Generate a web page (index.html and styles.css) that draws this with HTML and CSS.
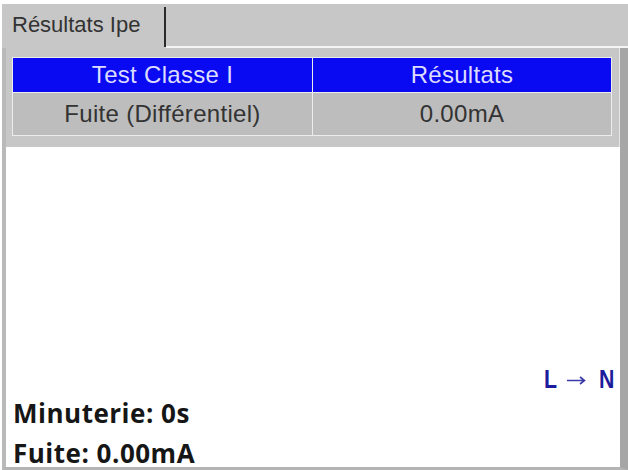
FILE: index.html
```html
<!DOCTYPE html>
<html lang="fr">
<head>
  <meta charset="UTF-8">
  <meta name="viewport" content="width=device-width, initial-scale=1.0">
  <title>Résultats Ipe</title>
  <link rel="stylesheet" href="styles.css">
</head>
<body>

<div class="screen">
  <div class="tabbar">
    <div class="tab">Résultats Ipe</div>
    <div class="tab-rest"></div>
  </div>

  <div class="frame">
    <div class="panel">
      <table class="results">
        <thead>
          <tr>
            <th>Test Classe I</th>
            <th>Résultats</th>
          </tr>
        </thead>
        <tbody>
          <tr>
            <td>Fuite (Différentiel)</td>
            <td>0.00mA</td>
          </tr>
        </tbody>
      </table>
    </div>

    <div class="content">
      <div class="polarity">
        <span class="pole">L</span>
        <svg class="arrow" width="19" height="9" viewBox="0 0 19 9">
          <path d="M0 4.5H17M13 1L17.5 4.5L13 8" fill="none" stroke="currentColor" stroke-width="1.6"/>
        </svg>
        <span class="pole">N</span>
      </div>
      <div class="readings">
        <p>Minuterie: 0s</p>
        <p>Fuite: 0.00mA</p>
      </div>
    </div>
  </div>
</div>

</body>
</html>
```

FILE: styles.css
```css
body {
  margin: 0;
  background: #fff;
  font-family: "Liberation Sans", Arial, sans-serif;
}

.screen {
  margin: 4px 0 0 2px;
  width: 626px;
  height: 466px;
  display: flex;
  flex-direction: column;
}

/* tab strip */
.tabbar {
  display: flex;
  height: 44px;
  background: #c7c7c7;
}

.tab {
  width: 152px;
  padding-left: 10px;
  border-right: 2px solid #2a2a2a;
  margin-top: 3px;
  margin-bottom: 1px;
  font-size: 22px;
  line-height: 36px;
  color: #333;
}

.tab-rest {
  flex: 1;
  border-bottom: 2px solid #f4f4f4;
}

/* body of the screen */
.frame {
  flex: 1;
  display: flex;
  flex-direction: column;
  border-left: 4px solid #b9b9b9;
  border-right: 8px solid #a6a6a6;
  border-bottom: 3px solid #b4b4b4;
}

.panel {
  background: #c7c7c7;
  padding: 9px 7px 11px 6px;
  border-right: 1px solid #e6e6e6;
}

.results {
  width: 600px;
  border-collapse: collapse;
  border: 1px solid #f6f6f6;
  font-size: 24px;
  letter-spacing: 0.3px;
  table-layout: fixed;
}

.results th, .results td {
  border: 1px solid #ececec;
  padding: 0;
  text-align: center;
  font-weight: normal;
}

.results th {
  height: 34px;
  background: #0a0af2;
  color: #dcdcff;
}

.results th:first-child, .results td:first-child {
  width: 299px;
}

.results td {
  height: 42px;
  background: #bdbdbd;
  color: #333;
}

.content {
  flex: 1;
  display: flex;
  flex-direction: column;
  justify-content: flex-end;
  padding: 0 5px 1px 6px;
  background: #fff;
}

.polarity {
  align-self: flex-end;
  display: flex;
  align-items: center;
  gap: 10px;
  margin: 0 3px 8px 0;
  font-weight: bold;
  font-size: 26px;
  line-height: 26px;
  color: #1c1c9c;
}

.pole {
  display: inline-block;
  width: 13px;
  transform: scaleX(0.82);
  transform-origin: left center;
}

.arrow {
  margin: 2px 3px 0 0;
  color: #3a3aa8;
}

.readings {
  display: flex;
  flex-direction: column;
  gap: 14px;
  font-family: "Open Sans", "Noto Sans", sans-serif;
  font-weight: bold;
  font-size: 26px;
  line-height: 26px;
  letter-spacing: 0.5px;
  color: #161616;
}

.readings p {
  margin: 0;
  padding-left: 1px;
}
```
